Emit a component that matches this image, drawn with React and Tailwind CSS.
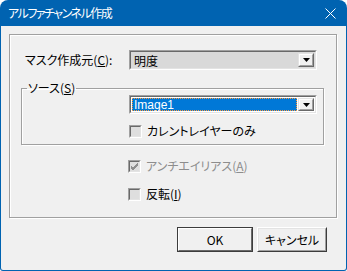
import React from 'react';

const jp = "font-['Noto_Sans_CJK_JP','Noto_Sans',sans-serif] [font-feature-settings:'palt']";

function Sunken({ className = '', children }) {
  return (
    <div className={`border border-t-[#a0a0a0] border-l-[#a0a0a0] border-b-white border-r-white ${className}`}>
      <div className="h-full border border-t-[#696969] border-l-[#696969] border-b-[#e3e3e3] border-r-[#e3e3e3]">
        {children}
      </div>
    </div>
  );
}

function DropButton() {
  return (
    <div className="w-[16px] h-full shrink-0 bg-[#f0f0f0] border border-t-[#e3e3e3] border-l-[#e3e3e3] border-b-[#696969] border-r-[#696969] flex items-center justify-center">
      <div className="w-full h-full border border-t-white border-l-white border-b-[#a0a0a0] border-r-[#a0a0a0] flex items-center justify-center">
        <svg width="7" height="4" viewBox="0 0 7 4"><path d="M0 0h7L3.5 4z" fill="#000" /></svg>
      </div>
    </div>
  );
}

function Check({ checked, disabled }) {
  return (
    <Sunken className="w-[13px] h-[13px] shrink-0">
      <div className="w-full h-full bg-[#dedede] flex items-center justify-center">
        {checked && (
          <svg width="9" height="9" viewBox="0 0 9 9">
            <path d="M1 4l2 2 5-5M1 5l2 2 5-5M1 6l2 2 5-5" stroke={disabled ? '#8d8d8d' : '#000'} strokeWidth="1" fill="none" />
          </svg>
        )}
      </div>
    </Sunken>
  );
}

function Btn({ children, primary }) {
  if (primary) {
    return (
      <div className="w-[76px] h-[25px] border border-[#3c3c3c]">
        <div className="h-full border border-t-white border-l-white border-b-[#696969] border-r-[#696969] bg-[#f0f0f0] flex items-center justify-center text-[12px] text-black">
          {children}
        </div>
      </div>
    );
  }
  return (
    <div className="w-[70px] h-[25px] border border-t-white border-l-white border-b-[#3c3c3c] border-r-[#3c3c3c]">
      <div className="h-full border border-t-[#e3e3e3] border-l-[#e3e3e3] border-b-[#a0a0a0] border-r-[#a0a0a0] bg-[#f0f0f0] flex items-center justify-center text-[12px] text-black">
        {children}
      </div>
    </div>
  );
}

export default function App() {
  return (
    <div className={`w-[347px] h-[271px] bg-[#0063b1] rounded-t-[8px] rounded-b-[3px] flex flex-col ${jp}`}>
      <div className="h-[26px] shrink-0 flex items-center justify-between pl-[8px] pr-[11px] text-white text-[12px]">
        <span className="tracking-[-1.5px]">アルファチャンネル作成</span>
        <svg width="11" height="11" viewBox="0 0 11 11">
          <path d="M0.5 0.5l10 10M10.5 0.5l-10 10" stroke="#fff" strokeWidth="1" />
        </svg>
      </div>
      <div className="flex-1 mx-[1px] mb-[1px] bg-[#f0f0f0] rounded-b-[2px] pt-[8px] pl-[8px] text-[12px] text-black leading-[16px]">
        <div className="w-[328px] h-[184px] border border-[#a0a0a0] shadow-[inset_1px_1px_0_#fff,1px_1px_0_#fff] pt-[15px]">
          <div className="flex items-center pl-[15px]">
            <span className="w-[104px]">マスク作成元(<span className="underline">C</span>):</span>
            <Sunken className="w-[188px] h-[20px]">
              <div className="h-full flex bg-[#d9d9d9] p-[1px]">
                <span className="flex-1 pl-[2px] leading-[16px]">明度</span>
                <DropButton />
              </div>
            </Sunken>
          </div>
          <fieldset className="ml-[11px] mt-[10px] w-[303px] h-[65px] border border-[#a0a0a0] shadow-[inset_1px_1px_0_#fff,1px_1px_0_#fff] p-0">
            <legend className="ml-[5px] px-[1px] leading-[16px]">ソース(<span className="underline">S</span>)</legend>
            <div className="pl-[107px]">
              <Sunken className="w-[188px] h-[19px] -mt-[1px]">
                <div className="h-full flex bg-white p-[1px]">
                  <div className="flex-1 mr-[1px] bg-[#0078d7] border border-dotted border-[#ff9a3c] text-white text-[12px] leading-[12px] pl-[1px] font-['Liberation_Sans',sans-serif]">
                    Image1
                  </div>
                  <DropButton />
                </div>
              </Sunken>
              <label className="flex items-center gap-[5px] mt-[9px]">
                <Check />
                <span>カレントレイヤーのみ</span>
              </label>
            </div>
          </fieldset>
          <div className="pl-[118px] mt-[13px] flex flex-col gap-[12px]">
            <label className="flex items-center gap-[5px] text-[#8d8d8d]">
              <Check checked disabled />
              <span>アンチエイリアス(<span className="underline">A</span>)</span>
            </label>
            <label className="flex items-center gap-[5px]">
              <Check />
              <span>反転(<span className="underline">I</span>)</span>
            </label>
          </div>
        </div>
        <div className="flex justify-end gap-[4px] pr-[19px] mt-[9px]">
          <Btn primary>OK</Btn>
          <Btn>キャンセル</Btn>
        </div>
      </div>
    </div>
  );
}
